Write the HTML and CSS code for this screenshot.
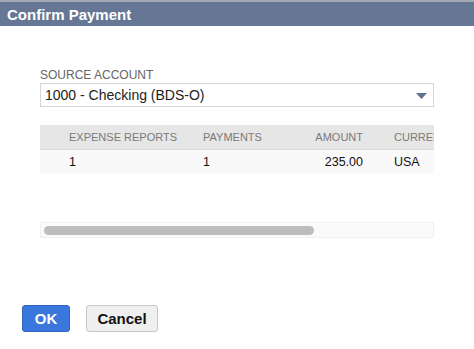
FILE: index.html
```html
<!DOCTYPE html>
<html>
<head>
<meta charset="utf-8">
<link rel="stylesheet" href="styles.css">
</head>
<body>
<div class="dialog">
  <div class="topline"></div>
  <div class="titlebar">Confirm Payment</div>
  <div class="content">
    <div class="label">SOURCE ACCOUNT</div>
    <div class="select">
      <span>1000 - Checking (BDS-O)</span>
      <svg class="arrow" width="11" height="6" viewBox="0 0 11 6"><path d="M0 0 H11 L5.5 6 Z" fill="#5f7190"/></svg>
    </div>
    <div class="table">
      <div class="row head">
        <div class="c c1">EXPENSE REPORTS</div>
        <div class="c c2">PAYMENTS</div>
        <div class="c c3">AMOUNT</div>
        <div class="c c4">CURRENCY</div>
      </div>
      <div class="row body">
        <div class="c c1">1</div>
        <div class="c c2">1</div>
        <div class="c c3">235.00</div>
        <div class="c c4">USA</div>
      </div>
    </div>
    <div class="scroll"><div class="thumb"></div></div>
  </div>
  <div class="buttons">
    <button class="btn ok">OK</button>
    <button class="btn cancel">Cancel</button>
  </div>
</div>
</body>
</html>
```
FILE: styles.css
```css
html, body { margin: 0; padding: 0; background: #fff; }
body { font-family: "Liberation Sans", Arial, sans-serif; width: 474px; height: 349px; overflow: hidden; }
.dialog { display: flex; flex-direction: column; height: 349px; }
.topline { height: 2px; background: #a3a8b3; }
.titlebar { height: 24px; background: #657795; color: #fff; font-weight: bold; font-size: 15px; line-height: 25px; padding-left: 7px; }
.content { padding: 42px 40px 0 40px; }
.label { font-size: 12px; color: #666; line-height: 14px; height: 15px; }
.select { height: 22px; border: 1px solid #d6d6d6; display: flex; align-items: center; justify-content: space-between; padding: 0 6px 0 4px; font-size: 14px; color: #222; }
.arrow { margin-top: 1px; }
.table { margin-top: 18px; overflow: hidden; }
.row { display: flex; height: 25px; align-items: center; white-space: nowrap; }
.head { background: #e6e6e6; color: #7a7a7a; font-size: 11px; border-bottom: 1px solid #dcdcdc; height: 24px; }
.body { background: #f9f9f9; color: #111; font-size: 12.5px; height: 24px; }
.c { flex: none; overflow: hidden; }
.c1 { padding-left: 29px; box-sizing: border-box; width: 163px; }
.c2 { width: 100px; }
.c3 { width: 60px; text-align: right; }
.c4 { margin-left: 31px; width: 40px; }
.scroll { margin-top: 48px; height: 14px; background: #fafafa; border: 1px solid #f0f0f0; display: flex; align-items: center; padding-left: 3px; }
.thumb { width: 270px; height: 9px; border-radius: 5px; background: #bdbdbd; }
.buttons { margin-top: auto; margin-bottom: 17px; padding-left: 22px; display: flex; gap: 16px; }
.btn { height: 27px; font-family: "Liberation Sans", Arial, sans-serif; font-weight: bold; font-size: 15px; border-radius: 3px; padding: 0; }
.ok { width: 48px; background: #3a77dd; color: #fff; border: 1px solid #2f63bb; }
.cancel { width: 72px; background: #efefef; color: #111; border: 1px solid #c8c8c8; }
```
